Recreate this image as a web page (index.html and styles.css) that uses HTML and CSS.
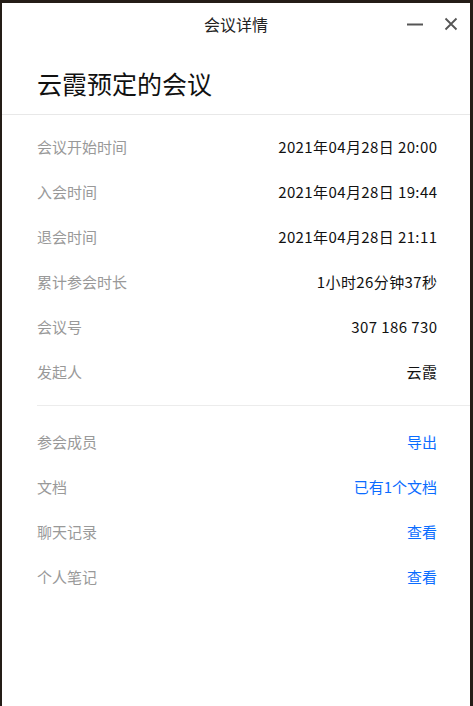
FILE: index.html
```html
<!DOCTYPE html>
<html>
<head>
  <meta charset="utf-8">
  <title>会议详情</title>
  <link rel="stylesheet" href="styles.css">
</head>
<body>
  <div class="window">
    <!-- title bar -->
    <div class="titlebar">
      <span></span>
      <div class="title">会议详情</div>
      <div class="controls">
        <svg class="ctl" width="18" height="14" viewBox="0 0 18 14"><path d="M1 7.5h16" stroke="#555" stroke-width="2"/></svg>
        <svg class="ctl" width="14" height="14" viewBox="0 0 14 14"><path d="M1.5 1.5l11 11M12.5 1.5l-11 11" stroke="#555" stroke-width="1.8"/></svg>
      </div>
    </div>

    <h1 class="heading">云霞预定的会议</h1>

    <div class="group first">
      <div class="row"><span class="label">会议开始时间</span><span class="value">2021年04月28日 20:00</span></div>
      <div class="row"><span class="label">入会时间</span><span class="value">2021年04月28日 19:44</span></div>
      <div class="row"><span class="label">退会时间</span><span class="value">2021年04月28日 21:11</span></div>
      <div class="row"><span class="label">累计参会时长</span><span class="value">1小时26分钟37秒</span></div>
      <div class="row"><span class="label">会议号</span><span class="value">307 186 730</span></div>
      <div class="row"><span class="label">发起人</span><span class="value">云霞</span></div>
    </div>

    <div class="group second">
      <div class="row"><span class="label">参会成员</span><a class="value link">导出</a></div>
      <div class="row"><span class="label">文档</span><a class="value link">已有1个文档</a></div>
      <div class="row"><span class="label">聊天记录</span><a class="value link">查看</a></div>
      <div class="row"><span class="label">个人笔记</span><a class="value link">查看</a></div>
    </div>
  </div>
</body>
</html>
```

FILE: styles.css
```css
/* page and window frame */
body {
  margin: 0;
  background: #241d17;
  font-family: "Noto Sans CJK SC", "Noto Sans", sans-serif;
}
.window {
  background: #fff;
  margin: 3px 3px 0 2px;
  height: 703px;
}

/* title bar */
.titlebar {
  display: grid;
  grid-template-columns: 1fr auto 1fr;
  align-items: center;
  height: 42px;
}
.title { font-size: 16px; color: #222; }
.controls {
  justify-self: end;
  display: flex;
  align-items: center;
  gap: 20px;
  padding-right: 12px;
}
.ctl { display: block; }

/* meeting name */
.heading {
  margin: 0;
  padding: 20px 35px 13px;
  font-size: 25px;
  font-weight: normal;
  line-height: 36px;
  color: #111;
  border-bottom: 1px solid #e8e8e8;
}

/* detail rows */
.group { padding: 9px 33px 11px 0; margin-left: 35px; }
.first { border-bottom: 1px solid #ececec; }
.second { padding-top: 13px; }
.row {
  display: flex;
  justify-content: space-between;
  align-items: center;
  height: 45px;
  font-size: 15px;
}
.label { color: #999; }
.value { color: #111; letter-spacing: 0.4px; margin-right: -0.4px; }
.link { color: #0a6cff; text-decoration: none; letter-spacing: 0; margin-right: 0; }
```
